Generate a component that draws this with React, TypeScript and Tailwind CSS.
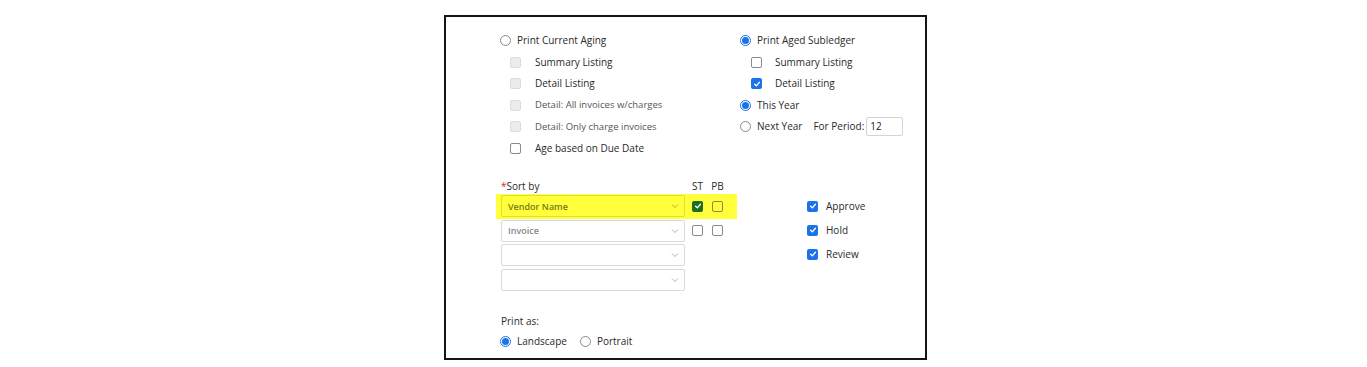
import React from "react";

const font = { fontFamily: '"Open Sans", "Liberation Sans", sans-serif' };

function Radio({ checked = false }: { checked?: boolean }) {
  return (
    <span
      className={`flex h-[11px] w-[11px] shrink-0 items-center justify-center rounded-full border bg-white ${
        checked ? "border-[#1a73e8]" : "border-[#8a8a8a]"
      }`}
    >
      {checked && <span className="h-[7px] w-[7px] rounded-full bg-[#1a73e8]" />}
    </span>
  );
}

function Check({ checked = false, disabled = false, green = false }: { checked?: boolean; disabled?: boolean; green?: boolean }) {
  if (checked) {
    return (
      <span
        className={`flex h-[11px] w-[11px] shrink-0 items-center justify-center rounded-[2px] ${
          green ? "bg-[#1d6e1d]" : "bg-[#1a73e8]"
        }`}
      >
        <svg viewBox="0 0 10 10" className="h-[8px] w-[8px]">
          <polyline points="2,5.2 4.2,7.3 8,2.8" fill="none" stroke="white" strokeWidth="1.7" strokeLinecap="round" strokeLinejoin="round" />
        </svg>
      </span>
    );
  }
  return (
    <span
      className={`block h-[11px] w-[11px] shrink-0 rounded-[2px] border ${
        disabled ? "border-[#dcdcdc] bg-[#ececec]" : green ? "border-[#8a8a40] bg-transparent" : "border-[#8a8a8a] bg-white"
      }`}
    />
  );
}

function Select({ value, hl = false }: { value?: string; hl?: boolean }) {
  return (
    <div
      className={`flex h-[22px] w-[184px] items-center justify-between rounded-[2px] border pl-[6px] pr-[4px] ${
        hl ? "border-[#dede3a]" : "border-[#dadada] bg-white"
      }`}
    >
      <span className={`text-[9px] font-semibold ${hl ? "text-[#7a7a14]" : "text-[#868686]"}`}>{value}</span>
      <svg viewBox="0 0 10 10" className="h-[10px] w-[10px]">
        <polyline points="2,3.5 5,6.5 8,3.5" fill="none" stroke={hl ? "#a8a840" : "#a8a8a8"} strokeWidth="0.9" />
      </svg>
    </div>
  );
}

export default function App() {
  const sub = "flex h-[21.5px] items-center";
  return (
    <div className="w-full bg-white pl-[444px] pt-[15px] text-[10px] text-[#2a2a2a]" style={font}>
      <div className="h-[345px] w-[483px] border-2 border-[#151515] pl-[54px] pt-[13px]">
        <div className="flex">
          <div className="w-[240px]">
            <div className={`${sub} gap-[6px]`}>
              <Radio />
              <span>Print Current Aging</span>
            </div>
            <div className={`${sub} gap-[14px] pl-[10px]`}>
              <Check disabled />
              <span>Summary Listing</span>
            </div>
            <div className={`${sub} gap-[14px] pl-[10px]`}>
              <Check disabled />
              <span>Detail Listing</span>
            </div>
            <div className={`${sub} gap-[14px] pl-[10px]`}>
              <Check disabled />
              <span className="text-[9.5px] text-[#555]">Detail: All invoices w/charges</span>
            </div>
            <div className={`${sub} gap-[14px] pl-[10px]`}>
              <Check disabled />
              <span className="text-[9.5px] text-[#555]">Detail: Only charge invoices</span>
            </div>
            <div className={`${sub} gap-[14px] pl-[10px]`}>
              <Check />
              <span>Age based on Due Date</span>
            </div>
          </div>
          <div>
            <div className={`${sub} gap-[6px]`}>
              <Radio checked />
              <span>Print Aged Subledger</span>
            </div>
            <div className={`${sub} gap-[13px] pl-[11px]`}>
              <Check />
              <span>Summary Listing</span>
            </div>
            <div className={`${sub} gap-[13px] pl-[11px]`}>
              <Check checked />
              <span>Detail Listing</span>
            </div>
            <div className={`${sub} gap-[6px]`}>
              <Radio checked />
              <span>This Year</span>
            </div>
            <div className={`${sub} gap-[6px]`}>
              <Radio />
              <span>Next Year</span>
              <span className="ml-[5px]">For Period:</span>
              <div className="ml-[-4px] flex h-[19px] w-[37px] items-center rounded-[2px] border border-[#d4d4d4] pl-[3px] text-[#222]">
                12
              </div>
            </div>
          </div>
        </div>

        <div className="mt-[20px] flex">
          <div className="w-[236px] pl-[1px]">
            <div className="flex h-[15px] items-center">
              <div className="w-[184px]">
                <span className="text-[#e02020]">*</span>Sort by
              </div>
              <div className="ml-[7px] flex w-[11px] justify-center">ST</div>
              <div className="ml-[9px] flex w-[11px] justify-center">PB</div>
            </div>
            <div className="-ml-[5px] flex h-[24.5px] w-[241px] items-center bg-[#ffff3c] pl-[5px]">
              <Select value="Vendor Name" hl />
              <span className="ml-[7px]">
                <Check checked green />
              </span>
              <span className="ml-[9px]">
                <Check green />
              </span>
            </div>
            <div className="flex h-[24.5px] items-center">
              <Select value="Invoice" />
              <span className="ml-[7px]">
                <Check />
              </span>
              <span className="ml-[9px]">
                <Check />
              </span>
            </div>
            <div className="flex h-[24.5px] items-center">
              <Select />
            </div>
            <div className="flex h-[24.5px] items-center">
              <Select />
            </div>
          </div>
          <div className="ml-[71px] pt-[15px]">
            {["Approve", "Hold", "Review"].map((t) => (
              <div key={t} className="flex h-[24px] items-center gap-[8px]">
                <Check checked />
                <span>{t}</span>
              </div>
            ))}
          </div>
        </div>

        <div className="mt-[22px] flex h-[15px] items-center pl-[1px]">Print as:</div>
        <div className="mt-[2px] flex h-[20px] items-center">
          <Radio checked />
          <span className="ml-[6px]">Landscape</span>
          <span className="ml-[13px]">
            <Radio />
          </span>
          <span className="ml-[6px]">Portrait</span>
        </div>
      </div>
    </div>
  );
}
